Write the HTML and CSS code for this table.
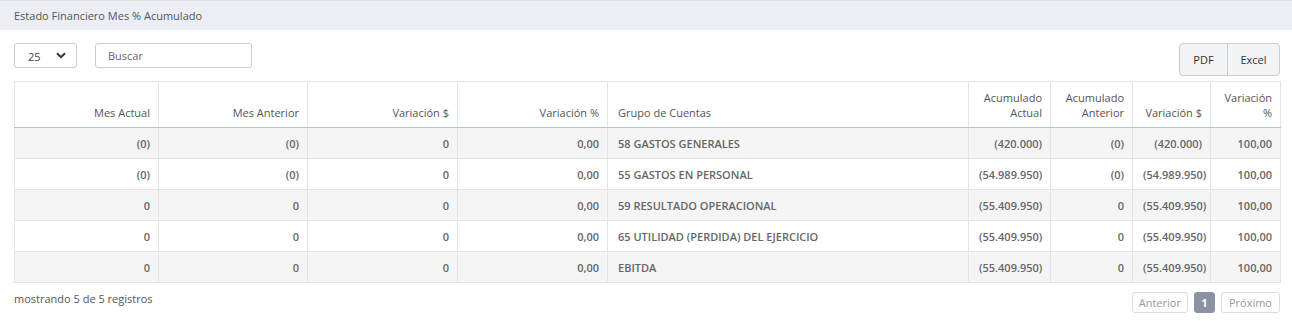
FILE: index.html
```html
<!DOCTYPE html>
<html lang="es">
<head>
<meta charset="utf-8">
<title>Estado Financiero Mes % Acumulado</title>
<link rel="stylesheet" href="styles.css">
</head>
<body>
<div class="panel">
  <div class="panel-heading">Estado Financiero Mes % Acumulado</div>
  <div class="panel-body">
    <div class="toolbar">
      <div class="toolbar-left">
        <div class="select"><span>25</span>
          <svg class="chev" width="10" height="7" viewBox="0 0 10 7"><path d="M1 1.2 L5 5.2 L9 1.2" fill="none" stroke="#333" stroke-width="2"/></svg>
        </div>
        <div class="search">Buscar</div>
      </div>
      <div class="btn-group">
        <div class="btn">PDF</div>
        <div class="btn">Excel</div>
      </div>
    </div>
    <table class="grid">
      <colgroup>
        <col style="width:144px"><col style="width:149px"><col style="width:150px"><col style="width:150px"><col style="width:361px"><col style="width:82px"><col style="width:82px"><col style="width:78px"><col style="width:70px">
      </colgroup>
      <thead>
        <tr>
          <th class="r">Mes Actual</th>
          <th class="r">Mes Anterior</th>
          <th class="r">Variación $</th>
          <th class="r">Variación %</th>
          <th class="l">Grupo de Cuentas</th>
          <th class="r">Acumulado Actual</th>
          <th class="r">Acumulado Anterior</th>
          <th class="r">Variación $</th>
          <th class="r">Variación %</th>
        </tr>
      </thead>
      <tbody>
        <tr><td>(0)</td><td>(0)</td><td>0</td><td>0,00</td><td class="l">58 GASTOS GENERALES</td><td>(420.000)</td><td>(0)</td><td>(420.000)</td><td>100,00</td></tr>
        <tr><td>(0)</td><td>(0)</td><td>0</td><td>0,00</td><td class="l">55 GASTOS EN PERSONAL</td><td>(54.989.950)</td><td>(0)</td><td>(54.989.950)</td><td>100,00</td></tr>
        <tr><td>0</td><td>0</td><td>0</td><td>0,00</td><td class="l">59 RESULTADO OPERACIONAL</td><td>(55.409.950)</td><td>0</td><td>(55.409.950)</td><td>100,00</td></tr>
        <tr><td>0</td><td>0</td><td>0</td><td>0,00</td><td class="l">65 UTILIDAD (PERDIDA) DEL EJERCICIO</td><td>(55.409.950)</td><td>0</td><td>(55.409.950)</td><td>100,00</td></tr>
        <tr><td>0</td><td>0</td><td>0</td><td>0,00</td><td class="l">EBITDA</td><td>(55.409.950)</td><td>0</td><td>(55.409.950)</td><td>100,00</td></tr>
      </tbody>
    </table>
    <div class="footer">
      <div class="info">mostrando 5 de 5 registros</div>
      <div class="pager">
        <div class="pg">Anterior</div>
        <div class="pg active">1</div>
        <div class="pg">Próximo</div>
      </div>
    </div>
  </div>
</div>
</body>
</html>
```
FILE: styles.css
```css
html, body {
  margin: 0;
  padding: 0;
  background: #fff;
  font-family: "Open Sans", "Liberation Sans", sans-serif;
  font-size: 11px;
  color: #555;
}
.panel-heading {
  height: 29px;
  border-top: 1px solid #dfe2e8;
  background: #eceef3;
  padding-left: 14px;
  display: flex;
  align-items: center;
  color: #555;
  font-size: 11px;
}
.panel-body {
  padding: 13px 12px 0 14px;
}
.toolbar {
  display: flex;
  justify-content: space-between;
  align-items: flex-start;
  margin-bottom: 5px;
}
.toolbar-left {
  display: flex;
  gap: 18px;
}
.select {
  box-sizing: border-box;
  width: 63px;
  height: 25px;
  border: 1px solid #ccc;
  border-radius: 3px;
  display: flex;
  align-items: center;
  justify-content: space-between;
  padding: 0 10px 0 13px;
  color: #444;
  font-size: 11px;
}
.select span { padding-top: 2px; }
.search {
  box-sizing: border-box;
  width: 157px;
  height: 25px;
  border: 1px solid #ccc;
  border-radius: 3px;
  display: flex;
  align-items: center;
  padding-left: 12px;
  color: #666;
}
.btn-group {
  display: flex;
  height: 33px;
  box-sizing: border-box;
  border: 1px solid #ccc;
  border-radius: 4px;
  background: #f3f4f6;
  overflow: hidden;
}
.btn {
  display: flex;
  align-items: center;
  justify-content: center;
  color: #333;
  font-size: 11px;
}
.btn:first-child {
  width: 47px;
  border-right: 1px solid #ccc;
}
.btn:last-child {
  width: 51px;
}
.grid {
  width: 1266px;
  border-collapse: collapse;
  table-layout: fixed;
  border: 1px solid #e0e2e6;
}
.grid th {
  font-weight: 400;
  color: #555;
  height: 46px;
  vertical-align: bottom;
  padding: 0 8px 7px 10px;
  line-height: 15px;
  border: 1px solid #e2e4e8;
  border-bottom: 1px solid #b9c3cf;
  box-sizing: border-box;
}
.grid th.r { text-align: right; }
.grid th.l { text-align: left; }
.grid td {
  height: 31px;
  box-sizing: border-box;
  padding: 0 8px 0 10px;
  text-align: right;
  font-weight: 600;
  color: #666;
  border: 1px solid #e2e4e8;
  white-space: nowrap;
}
.grid td.l { text-align: left; }
.grid tbody tr:nth-child(odd) td { background: #f5f5f6; }
.footer {
  display: flex;
  justify-content: space-between;
  align-items: flex-start;
  margin-top: 9px;
}
.info {
  color: #555;
  margin-top: -1px;
}
.pager {
  display: flex;
  gap: 6px;
}
.pg {
  box-sizing: border-box;
  height: 21px;
  border: 1px solid #ddd;
  border-radius: 3px;
  padding: 0 7px;
  display: flex;
  align-items: center;
  color: #999;
}
.pg:first-child { padding: 0 6px; }
.pg.active {
  background: #8b92a4;
  border-color: #8b92a4;
  color: #fff;
  font-weight: 700;
  width: 21px;
  justify-content: center;
  padding: 0;
}
```
